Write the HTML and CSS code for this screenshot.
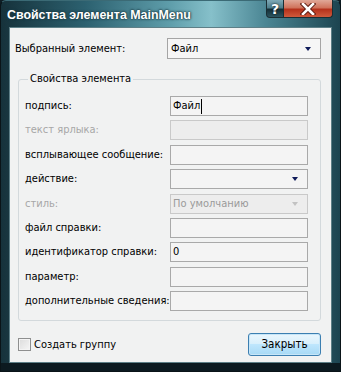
FILE: index.html
```html
<!DOCTYPE html>
<html lang="ru">
<head>
<meta charset="utf-8">
<link rel="stylesheet" href="styles.css">
</head>
<body>
<div class="window">
  <div class="titlebar">
    <span class="title">Свойства элемента MainMenu</span>
    <div class="caption-buttons">
      <div class="cbtn help">?</div>
      <div class="cbtn close">
        <svg width="16" height="12" viewBox="0 0 16 12"><path d="M3 1 L13 11 M13 1 L3 11" stroke="#5a1a10" stroke-width="4.5" stroke-linecap="square"/><path d="M3 1 L13 11 M13 1 L3 11" stroke="#ffffff" stroke-width="2.6" stroke-linecap="square"/></svg>
      </div>
    </div>
  </div>
  <div class="client">
    <div class="top-row">
      <span class="label">Выбранный элемент:</span>
      <div class="combo top-combo"><span>Файл</span><span class="arrow"></span></div>
    </div>
    <fieldset class="group">
      <legend>Свойства элемента</legend>
      <div class="grid">
        <span class="label">подпись:</span>
        <div class="field"><span>Файл</span><span class="caret"></span></div>
        <span class="label disabled">текст ярлыка:</span>
        <div class="field is-disabled"></div>
        <span class="label">всплывающее сообщение:</span>
        <div class="field"></div>
        <span class="label">действие:</span>
        <div class="field combo"><span></span><span class="arrow"></span></div>
        <span class="label disabled">стиль:</span>
        <div class="field combo is-disabled"><span>По умолчанию</span><span class="arrow light"></span></div>
        <span class="label">файл справки:</span>
        <div class="field"></div>
        <span class="label">идентификатор справки:</span>
        <div class="field"><span>0</span></div>
        <span class="label">параметр:</span>
        <div class="field"></div>
        <span class="label">дополнительные сведения:</span>
        <div class="field"></div>
      </div>
    </fieldset>
    <div class="bottom-row">
      <label class="check"><span class="box"></span><span>Создать группу</span></label>
      <div class="button">Закрыть</div>
    </div>
  </div>
</div>
</body>
</html>
```

FILE: styles.css
```css
* { box-sizing: border-box; }
html, body { margin: 0; padding: 0; background: #0e1d24; }
body { font-family: "DejaVu Sans Condensed", "DejaVu Sans", sans-serif; font-stretch: condensed; font-size: 11px; color: #000; }

.window {
  width: 341px;
  height: 372px;
  display: flex;
  flex-direction: column;
  padding: 0 8px 8px 8px;
  background:
    linear-gradient(90deg, #16323b 0%, #2c6170 25%, #5f9eab 50%, #86c0ca 62%, #4b8694 78%, #1c4450 100%);
  border: 1px solid #0a1418;
  border-top-color: #3b6a75;
  border-radius: 6px 6px 0 0;
  box-shadow: inset 0 -14px 0 -6px #0c1a20;
}

.titlebar {
  height: 26px;
  display: flex;
  justify-content: space-between;
  align-items: flex-start;
  margin: 0 -1px 0 -2px;
}
.title {
  margin-top: 7px;
  font-family: "Liberation Sans", Arial, sans-serif;
  font-stretch: normal;
  font-weight: bold;
  font-size: 12.4px;
  color: #ffffff;
  text-shadow: 0 0 3px #1c3d46, 0 0 2px #1c3d46, 0 0 1px #1c3d46;
}
.caption-buttons { display: flex; margin-top: -1px; }
.cbtn {
  height: 18px;
  display: flex;
  align-items: center;
  justify-content: center;
  border: 1px solid #1a2e34;
  border-top: none;
  color: #fff;
  font-weight: bold;
  font-size: 14px;
}
.help {
  width: 18px;
  border-radius: 0 0 0 4px;
  background: linear-gradient(180deg, #7fa9b6 0%, #4f7f8c 45%, #142e36 55%, #2d5560 100%);
  text-shadow: 0 0 2px #000;
  font-family: "DejaVu Sans", sans-serif;
  font-stretch: normal;
}
.close {
  width: 49px;
  border-left: none;
  border-radius: 0 0 4px 0;
  background: linear-gradient(180deg, #e0a898 0%, #d0735c 45%, #b5321c 55%, #cf5a3c 100%);
}

.client {
  flex: 1;
  background: #f1f2f2;
  border: 1px solid #5d7f87;
  padding: 10px 10px 0 5px;
  display: flex;
  flex-direction: column;
}

.label { white-space: nowrap; line-height: 20px; }
.label.disabled { color: #a7a7a7; }

.top-row {
  display: flex;
  justify-content: space-between;
  align-items: center;
  height: 21px;
}
.combo { display: flex; justify-content: space-between; align-items: center; }
.top-combo {
  width: 154px;
  height: 21px;
  border: 1px solid #a5a5a5;
  background: #f6f6f6;
  padding: 0 9px 0 3px;
}
.arrow {
  width: 0; height: 0;
  border-left: 3.5px solid transparent;
  border-right: 3.5px solid transparent;
  border-top: 4px solid #101c5a;
}
.arrow.light { border-top-color: #c2c2c2; }

.group {
  margin: 13px 0 0 3px;
  padding: 10px 15px 9px 6px;
  border: 1px solid #d3d9dc;
  border-radius: 3px;
  min-width: 0;
}
.group legend {
  padding: 0 2px;
  margin-left: 3px;
  color: #000;
  line-height: 14px;
}
.grid {
  display: grid;
  grid-template-columns: 145px 138px;
  row-gap: 4.375px;
  align-items: center;
}
.field {
  height: 20px;
  border: 1px solid #a9a9a9;
  background: #f4f4f4;
  padding: 0 2px;
  display: flex;
  align-items: center;
  line-height: 16px;
}
.field.combo { padding: 0 9px 0 2px; justify-content: space-between; }
.field.is-disabled { background: #ededed; border-color: #c9c9c9; color: #9a9a9a; }
.caret { display: inline-block; width: 1px; height: 15px; background: #000; margin-left: 1px; }

.bottom-row {
  flex: 1;
  display: flex;
  justify-content: space-between;
  align-items: center;
  padding: 5px 0 0 3px;
}
.check { display: flex; align-items: center; gap: 3px; }
.box {
  width: 13px; height: 13px;
  border: 1px solid #8e8f8f;
  background: linear-gradient(135deg, #dcdcdc 0%, #f6f6f6 100%);
  box-shadow: inset 0 0 0 1px #f4f4f4;
}
.button {
  width: 73px;
  height: 23px;
  border: 1px solid #3c7fb1;
  border-radius: 3px;
  display: flex;
  align-items: center;
  justify-content: center;
  color: #000;
  font-size: 11.5px;
  background: linear-gradient(180deg, #eaf6fd 0%, #d9f0fc 45%, #bee6fd 50%, #a7d9f5 100%);
  box-shadow: inset 0 0 0 1px #c7e6f8;
}
```
